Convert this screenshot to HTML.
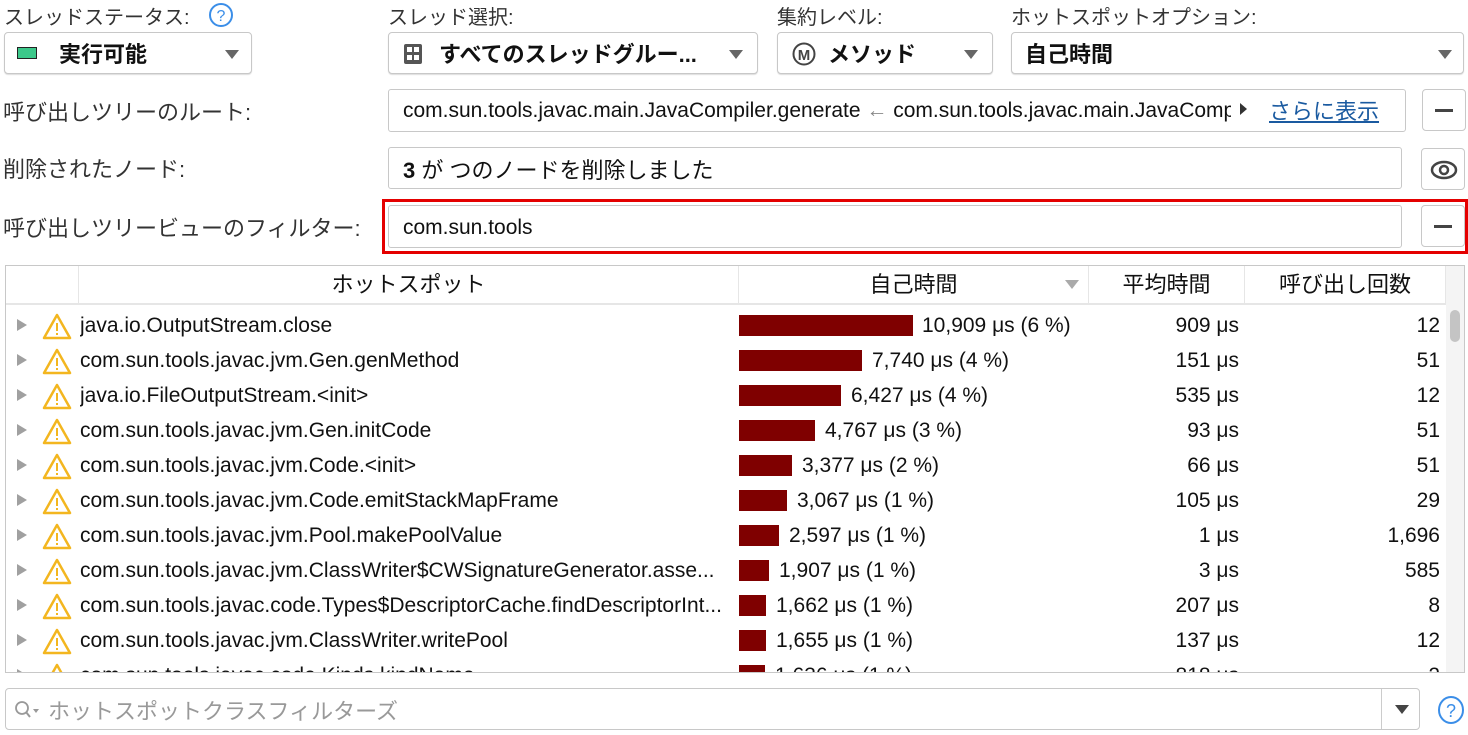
<!DOCTYPE html>
<html><head><meta charset="utf-8"><style>
*{box-sizing:border-box;margin:0;padding:0}
body{width:1468px;height:735px;background:#fff;position:relative;overflow:hidden;font-family:"Liberation Sans","Noto Sans CJK JP",sans-serif;color:#111;font-size:21px}
.a{position:absolute}
.lbl{position:absolute;color:#333;font-size:20px;white-space:nowrap}
.box{position:absolute;border:1px solid #c8c8c8;border-radius:3px;background:#fff}
.combo{position:absolute;border:1px solid #c8c8c8;border-radius:4px;background:#fff;box-shadow:0 1px 1px #ddd}
.combo .tx{position:absolute;top:4px;font-weight:bold;font-size:22px;white-space:nowrap}
.arr{position:absolute;width:0;height:0;border-left:7px solid transparent;border-right:7px solid transparent;border-top:9px solid #666}
.btn{position:absolute;border:1px solid #c8c8c8;border-radius:4px;background:#fff;width:44px;height:42px}
.dash{position:absolute;left:12px;top:19px;width:18px;height:3px;background:#444}
.tbl{position:absolute;left:5px;top:265px;width:1460px;height:408px;border:1px solid #c8c8c8;overflow:hidden}
.hd{position:absolute;top:0;height:39px;border-bottom:2px solid #e6e6e6;border-right:1px solid #e6e6e6;text-align:center;line-height:38px;font-size:22px}
.row{position:absolute;left:0;width:1440px;height:35px}
.row .t{position:absolute;left:11px;top:11px;border-top:6px solid transparent;border-bottom:6px solid transparent;border-left:10px solid #a0a0a0}
.row svg{position:absolute;left:36px;top:4px}
.row .n{position:absolute;left:74px;top:6px;white-space:nowrap;width:658px;overflow:hidden}
.row .b{position:absolute;left:733px;top:7px;height:21px;background:#7f0000}
.row .v{position:absolute;top:6px;white-space:nowrap}
.row .g{position:absolute;right:207px;top:6px;text-align:right;white-space:nowrap}
.row .c{position:absolute;right:6px;top:6px;text-align:right}
</style></head><body>

<div class="lbl" style="left:4px;top:1px">スレッドステータス:</div>
<svg class="a" style="left:208px;top:2px" width="26" height="26" viewBox="0 0 26 26"><circle cx="13" cy="13" r="11" fill="none" stroke="#3b8ee8" stroke-width="2"/><text x="13" y="19" text-anchor="middle" font-size="16" fill="#3b8ee8" font-family="Liberation Sans">?</text></svg>
<div class="lbl" style="left:388px;top:1px">スレッド選択:</div>
<div class="lbl" style="left:777px;top:1px">集約レベル:</div>
<div class="lbl" style="left:1011px;top:1px">ホットスポットオプション:</div>

<div class="combo" style="left:4px;top:32px;width:248px;height:42px">
 <div class="a" style="left:12px;top:14px;width:20px;height:12px;background:#3cc88a;border:1px solid #222"></div>
 <div class="tx" style="left:54px">実行可能</div>
 <div class="arr" style="left:220px;top:17px"></div></div>
<div class="combo" style="left:388px;top:32px;width:370px;height:42px">
 <svg class="a" style="left:14px;top:10px" width="20" height="22"><rect x="1" y="1" width="18" height="20" rx="2" fill="#555"/><rect x="4" y="4" width="5" height="5" fill="#fff"/><rect x="11" y="4" width="5" height="5" fill="#fff"/><rect x="4" y="12" width="5" height="5" fill="#fff"/><rect x="11" y="12" width="5" height="5" fill="#fff"/></svg>
 <div class="tx" style="left:50px">すべてのスレッドグルー...</div>
 <div class="arr" style="left:340px;top:17px"></div></div>
<div class="combo" style="left:777px;top:32px;width:216px;height:42px">
 <svg class="a" style="left:14px;top:9px" width="24" height="24"><circle cx="12" cy="12" r="10.5" fill="none" stroke="#444" stroke-width="2"/><text x="12" y="18" text-anchor="middle" font-size="15" font-weight="bold" fill="#444" font-family="Liberation Sans">M</text></svg>
 <div class="tx" style="left:50px">メソッド</div>
 <div class="arr" style="left:186px;top:17px"></div></div>
<div class="combo" style="left:1011px;top:32px;width:453px;height:42px">
 <div class="tx" style="left:13px">自己時間</div>
 <div class="arr" style="left:426px;top:17px"></div></div>

<div class="lbl" style="left:3px;top:95px;font-size:22px">呼び出しツリーのルート:</div>
<div class="box" style="left:388px;top:89px;width:1018px;height:43px">
 <div class="a" style="left:14px;top:9px;white-space:nowrap;width:828px;overflow:hidden">com.sun.tools.javac.main.JavaCompiler.generate <span style="color:#888">←</span> com.sun.tools.javac.main.JavaCompiler.compile</div>
 <div class="a" style="left:851px;top:13px;border-top:6px solid transparent;border-bottom:6px solid transparent;border-left:7px solid #333"></div>
 <div class="a" style="left:880px;top:4px;color:#1a5aa0;text-decoration:underline;font-size:22px">さらに表示</div></div>
<div class="btn" style="left:1422px;top:89px"><div class="dash"></div></div>

<div class="lbl" style="left:3px;top:152px;font-size:22px">削除されたノード:</div>
<div class="box" style="left:388px;top:147px;width:1014px;height:42px">
 <div class="a" style="left:14px;top:5px;font-size:22px;white-space:nowrap"><b>3</b> が つのノードを削除しました</div></div>
<div class="btn" style="left:1421px;top:148px"><svg class="a" style="left:8px;top:10px" width="28" height="22"><ellipse cx="14" cy="11" rx="12" ry="8" fill="none" stroke="#444" stroke-width="2.5"/><circle cx="14" cy="11" r="4" fill="none" stroke="#444" stroke-width="2.5"/></svg></div>

<div class="lbl" style="left:3px;top:211px;font-size:22px">呼び出しツリービューのフィルター:</div>
<div class="a" style="left:382px;top:199px;width:1086px;height:55px;border:3px solid #e40000"></div>
<div class="box" style="left:388px;top:205px;width:1014px;height:43px">
 <div class="a" style="left:14px;top:10px">com.sun.tools</div></div>
<div class="btn" style="left:1421px;top:205px"><div class="dash"></div></div>

<div class="tbl">
 <div class="hd" style="left:0;width:73px"></div>
 <div class="hd" style="left:73px;width:660px">ホットスポット</div>
 <div class="hd" style="left:733px;width:350px">自己時間<div class="arr" style="left:326px;top:14px;border-top-color:#aaa"></div></div>
 <div class="hd" style="left:1083px;width:156px">平均時間</div>
 <div class="hd" style="left:1239px;width:201px">呼び出し回数</div>
 <div class="a" style="left:1440px;top:0;width:20px;height:408px;background:#f4f4f4"></div>
 <div class="a" style="left:1444px;top:44px;width:10px;height:32px;background:#c4c4c4;border-radius:5px"></div>

 <div class="row" style="top:42px"><div class="t"></div><svg width="30" height="28"><path d="M15 3 L28 26 L2 26 Z" fill="none" stroke="#f3b61f" stroke-width="2.5" stroke-linejoin="round"/><path d="M15 11v8M15 21v2" stroke="#f3b61f" stroke-width="2"/></svg><div class="n">java.io.OutputStream.close</div><div class="b" style="width:174px"></div><div class="v" style="left:916px">10,909 μs (6 %)</div><div class="g">909 μs</div><div class="c">12</div></div>
 <div class="row" style="top:77px"><div class="t"></div><svg width="30" height="28"><path d="M15 3 L28 26 L2 26 Z" fill="none" stroke="#f3b61f" stroke-width="2.5" stroke-linejoin="round"/><path d="M15 11v8M15 21v2" stroke="#f3b61f" stroke-width="2"/></svg><div class="n">com.sun.tools.javac.jvm.Gen.genMethod</div><div class="b" style="width:123px"></div><div class="v" style="left:866px">7,740 μs (4 %)</div><div class="g">151 μs</div><div class="c">51</div></div>
 <div class="row" style="top:112px"><div class="t"></div><svg width="30" height="28"><path d="M15 3 L28 26 L2 26 Z" fill="none" stroke="#f3b61f" stroke-width="2.5" stroke-linejoin="round"/><path d="M15 11v8M15 21v2" stroke="#f3b61f" stroke-width="2"/></svg><div class="n">java.io.FileOutputStream.&lt;init&gt;</div><div class="b" style="width:102px"></div><div class="v" style="left:845px">6,427 μs (4 %)</div><div class="g">535 μs</div><div class="c">12</div></div>
 <div class="row" style="top:147px"><div class="t"></div><svg width="30" height="28"><path d="M15 3 L28 26 L2 26 Z" fill="none" stroke="#f3b61f" stroke-width="2.5" stroke-linejoin="round"/><path d="M15 11v8M15 21v2" stroke="#f3b61f" stroke-width="2"/></svg><div class="n">com.sun.tools.javac.jvm.Gen.initCode</div><div class="b" style="width:76px"></div><div class="v" style="left:819px">4,767 μs (3 %)</div><div class="g">93 μs</div><div class="c">51</div></div>
 <div class="row" style="top:182px"><div class="t"></div><svg width="30" height="28"><path d="M15 3 L28 26 L2 26 Z" fill="none" stroke="#f3b61f" stroke-width="2.5" stroke-linejoin="round"/><path d="M15 11v8M15 21v2" stroke="#f3b61f" stroke-width="2"/></svg><div class="n">com.sun.tools.javac.jvm.Code.&lt;init&gt;</div><div class="b" style="width:53px"></div><div class="v" style="left:796px">3,377 μs (2 %)</div><div class="g">66 μs</div><div class="c">51</div></div>
 <div class="row" style="top:217px"><div class="t"></div><svg width="30" height="28"><path d="M15 3 L28 26 L2 26 Z" fill="none" stroke="#f3b61f" stroke-width="2.5" stroke-linejoin="round"/><path d="M15 11v8M15 21v2" stroke="#f3b61f" stroke-width="2"/></svg><div class="n">com.sun.tools.javac.jvm.Code.emitStackMapFrame</div><div class="b" style="width:48px"></div><div class="v" style="left:791px">3,067 μs (1 %)</div><div class="g">105 μs</div><div class="c">29</div></div>
 <div class="row" style="top:252px"><div class="t"></div><svg width="30" height="28"><path d="M15 3 L28 26 L2 26 Z" fill="none" stroke="#f3b61f" stroke-width="2.5" stroke-linejoin="round"/><path d="M15 11v8M15 21v2" stroke="#f3b61f" stroke-width="2"/></svg><div class="n">com.sun.tools.javac.jvm.Pool.makePoolValue</div><div class="b" style="width:40px"></div><div class="v" style="left:783px">2,597 μs (1 %)</div><div class="g">1 μs</div><div class="c">1,696</div></div>
 <div class="row" style="top:287px"><div class="t"></div><svg width="30" height="28"><path d="M15 3 L28 26 L2 26 Z" fill="none" stroke="#f3b61f" stroke-width="2.5" stroke-linejoin="round"/><path d="M15 11v8M15 21v2" stroke="#f3b61f" stroke-width="2"/></svg><div class="n">com.sun.tools.javac.jvm.ClassWriter$CWSignatureGenerator.asse...</div><div class="b" style="width:30px"></div><div class="v" style="left:773px">1,907 μs (1 %)</div><div class="g">3 μs</div><div class="c">585</div></div>
 <div class="row" style="top:322px"><div class="t"></div><svg width="30" height="28"><path d="M15 3 L28 26 L2 26 Z" fill="none" stroke="#f3b61f" stroke-width="2.5" stroke-linejoin="round"/><path d="M15 11v8M15 21v2" stroke="#f3b61f" stroke-width="2"/></svg><div class="n">com.sun.tools.javac.code.Types$DescriptorCache.findDescriptorInt...</div><div class="b" style="width:27px"></div><div class="v" style="left:770px">1,662 μs (1 %)</div><div class="g">207 μs</div><div class="c">8</div></div>
 <div class="row" style="top:357px"><div class="t"></div><svg width="30" height="28"><path d="M15 3 L28 26 L2 26 Z" fill="none" stroke="#f3b61f" stroke-width="2.5" stroke-linejoin="round"/><path d="M15 11v8M15 21v2" stroke="#f3b61f" stroke-width="2"/></svg><div class="n">com.sun.tools.javac.jvm.ClassWriter.writePool</div><div class="b" style="width:27px"></div><div class="v" style="left:770px">1,655 μs (1 %)</div><div class="g">137 μs</div><div class="c">12</div></div>
 <div class="row" style="top:392px"><div class="t"></div><svg width="30" height="28"><path d="M15 3 L28 26 L2 26 Z" fill="none" stroke="#f3b61f" stroke-width="2.5" stroke-linejoin="round"/><path d="M15 11v8M15 21v2" stroke="#f3b61f" stroke-width="2"/></svg><div class="n">com.sun.tools.javac.code.Kinds.kindName</div><div class="b" style="width:26px"></div><div class="v" style="left:769px">1,636 μs (1 %)</div><div class="g">818 μs</div><div class="c">2</div></div>
</div>

<div class="box" style="left:5px;top:688px;width:1415px;height:42px;border-radius:4px">
 <svg class="a" style="left:8px;top:11px" width="30" height="20"><circle cx="8" cy="8" r="6" fill="none" stroke="#999" stroke-width="1.8"/><path d="M12 12l4 5" stroke="#999" stroke-width="2"/><path d="M19 9l6 0l-3 4z" fill="#999"/></svg>
 <div class="a" style="left:42px;top:5px;color:#999;font-size:22px;white-space:nowrap">ホットスポットクラスフィルターズ</div>
 <div class="a" style="left:1375px;top:0;width:1px;height:40px;background:#ccc"></div>
 <div class="arr" style="left:1389px;top:16px;border-top-color:#444"></div></div>
<svg class="a" style="left:1437px;top:695px" width="28" height="30"><ellipse cx="14" cy="15" rx="12" ry="13" fill="none" stroke="#3b8ee8" stroke-width="2"/><text x="14" y="22" text-anchor="middle" font-size="18" fill="#3b8ee8" font-family="Liberation Sans">?</text></svg>
</body></html>
